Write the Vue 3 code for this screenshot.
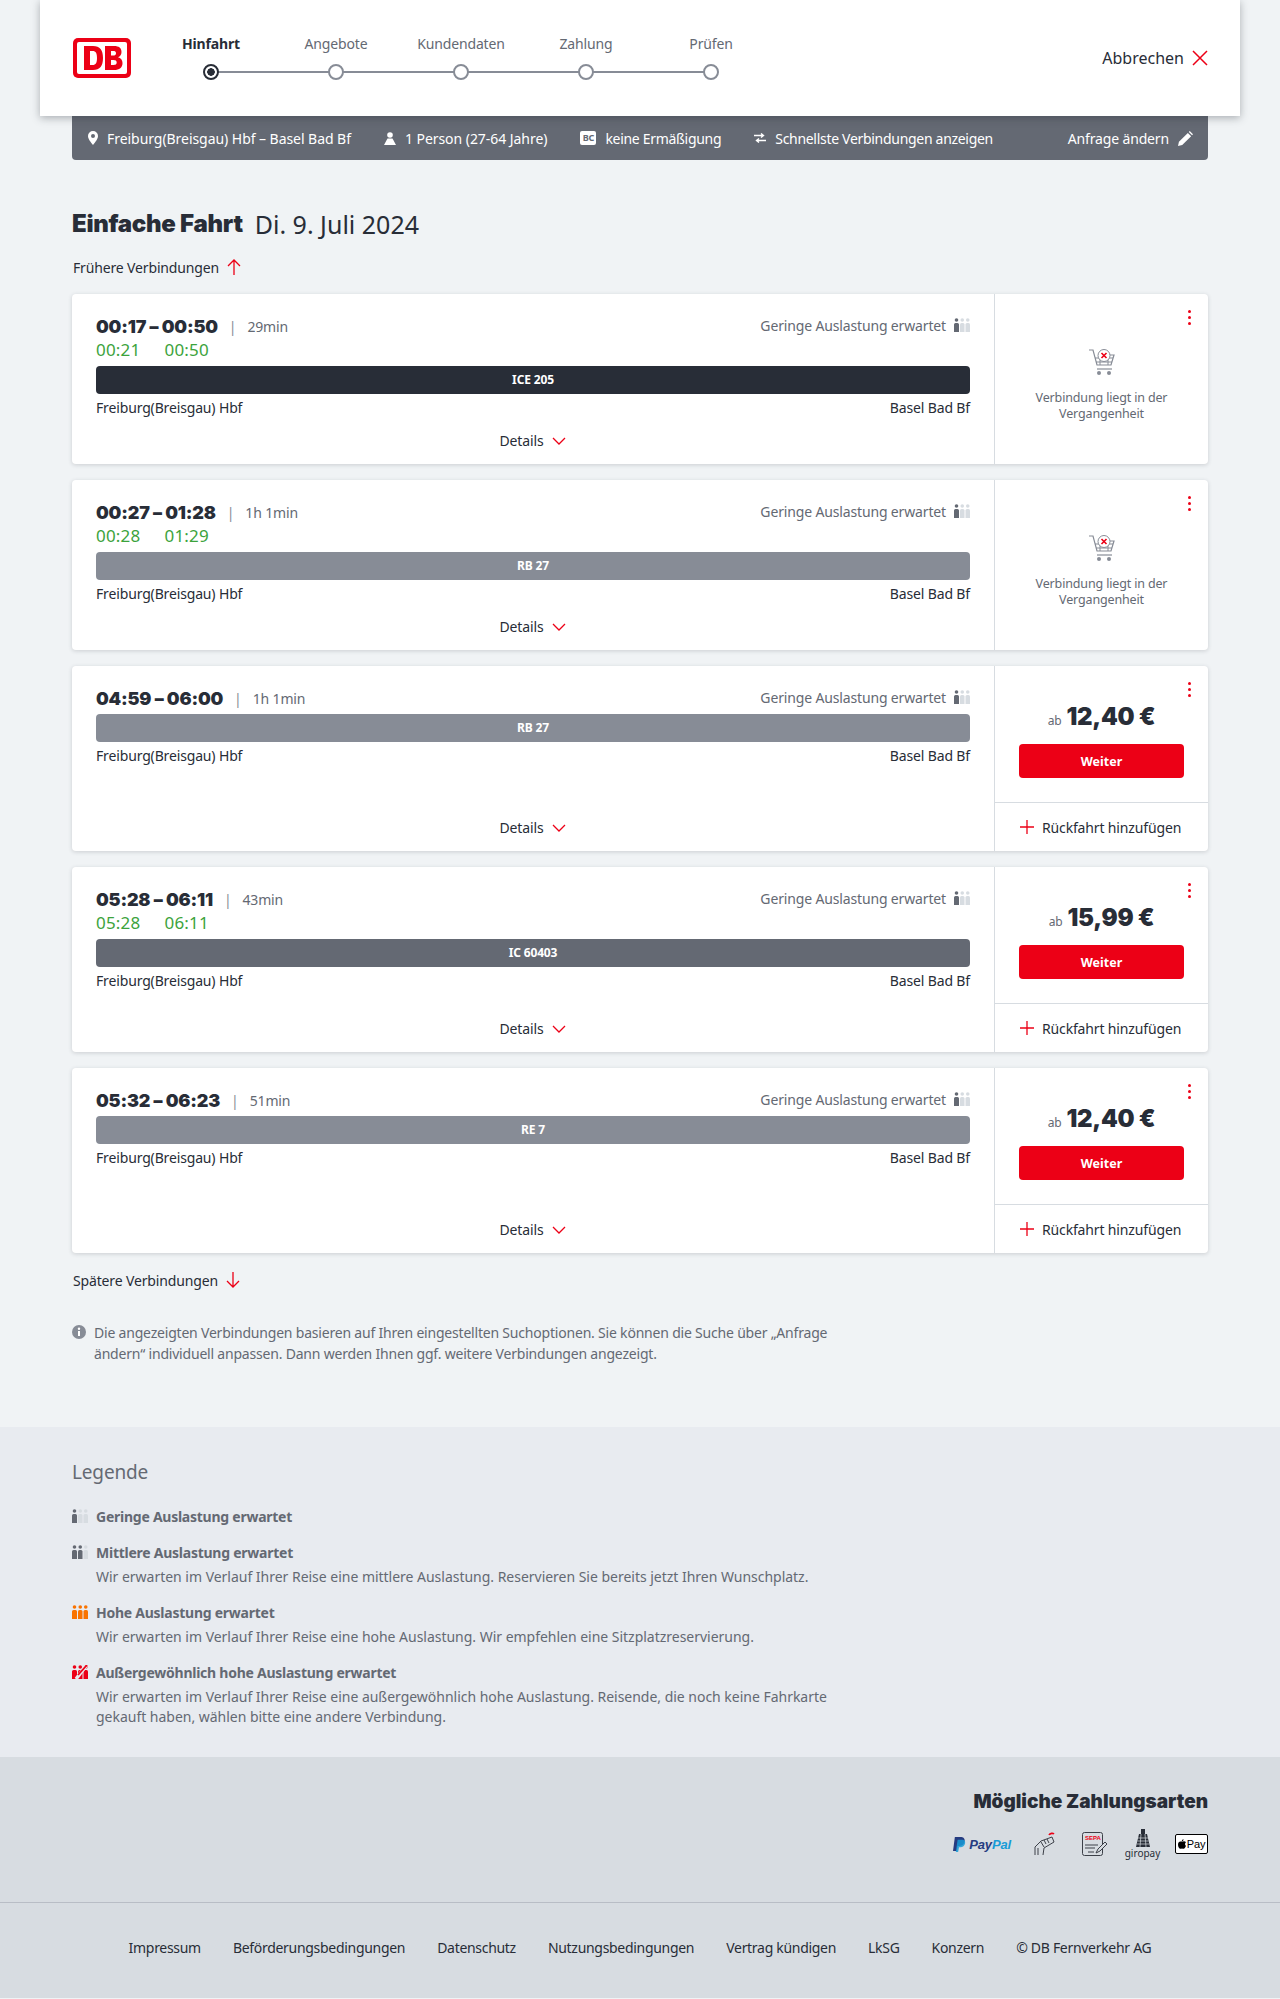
<template>
  <div class="page">
    <header class="top">
      <svg class="logo" viewBox="0 0 58 40" width="58" height="40">
        <rect width="58" height="40" rx="5" fill="#ec0016" />
        <rect x="4" y="4" width="50" height="32" rx="2" fill="#fff" />
        <path d="M11 8h9c7 0 10 4 10 12s-3 12-10 12h-9zM17 13v14h2.500c3.500 0 4.500-2.500 4.500-7s-1-7-4.500-7z" fill="#ec0016" fill-rule="evenodd" />
        <path d="M32 8h9c5 0 7.500 2 7.500 6 0 2.500-1.200 4.300-3.500 5.300 2.800.8 4.500 2.900 4.500 5.700 0 4.800-3 7-8.500 7h-9zM38 13v4.500h2c2 0 3-.7 3-2.300S42 13 40 13zM38 22v5h2.500c2.200 0 3.200-.8 3.200-2.500s-1-2.500-3.200-2.500z" fill="#ec0016" fill-rule="evenodd" />
      </svg>
      <ol class="steps">
        <li v-for="(s, i) in steps" :key="s" class="step" :class="{ active: i === 0, last: i === steps.length - 1 }">
          <span class="step-label">{{ s }}</span>
          <span class="step-dot"></span>
        </li>
      </ol>
      <a class="cancel">
        Abbrechen
        <svg viewBox="0 0 16 16" width="16" height="16"><path d="M1 1l14 14M15 1L1 15" stroke="#ec0016" stroke-width="1.500" fill="none" /></svg>
      </a>
    </header>

    <div class="wrap">
      <div class="summary">
        <span class="sum-item">
          <svg viewBox="0 0 10 14" width="10" height="14"><path d="M5 0a5 5 0 0 1 5 5c0 3-3 6.500-5 9-2-2.500-5-6-5-9a5 5 0 0 1 5-5zm0 3a2 2 0 1 0 0 4 2 2 0 0 0 0-4z" fill="#fff" fill-rule="evenodd" /></svg>
          Freiburg(Breisgau) Hbf – Basel Bad Bf
        </span>
        <span class="sum-item">
          <svg viewBox="0 0 12 13" width="12" height="13"><circle cx="6" cy="3" r="2.800" fill="#fff" /><path d="M3.500 6.500h5L12 13H0z" fill="#fff" /></svg>
          1 Person (27-64 Jahre)
        </span>
        <span class="sum-item tight">
          <span class="bc">BC</span>
          keine Ermäßigung
        </span>
        <span class="sum-item tight">
          <svg viewBox="0 0 12 10" width="12" height="10"><path d="M0 2.500h9M7 .5l2.500 2L7 4.500M12 7.500H3M5 5.500l-2.500 2L5 9.500" stroke="#fff" stroke-width="1.400" fill="none" /></svg>
          Schnellste Verbindungen anzeigen
        </span>
        <span class="sum-item change">
          Anfrage ändern
          <svg viewBox="0 0 16 16" width="15" height="15"><path d="M0 16l1-4.500L10.500 2l3.500 3.500L4.500 15zM11.500 1l1-1L16 3.500l-1 1z" fill="#fff" /></svg>
        </span>
      </div>

      <h1 class="title"><b>Einfache Fahrt</b><span>Di. 9. Juli 2024</span></h1>

      <a class="more first">
        Frühere Verbindungen
        <svg viewBox="0 0 14 16" width="14" height="16"><path d="M7 16V1M1 7l6-6 6 6" stroke="#ec0016" stroke-width="1.300" fill="none" /></svg>
      </a>

      <article v-for="c in connections" :key="c.time" class="card">
        <div class="main">
          <div class="row">
            <span class="time">{{ c.time }}</span>
            <span class="sep">|</span>
            <span class="dur">{{ c.dur }}</span>
            <span class="load">
              Geringe Auslastung erwartet
              <svg viewBox="0 0 16 14" width="16" height="14">
                <g v-for="(f, n) in figures" :key="n" :fill="n === 0 ? '#646973' : '#d7dce1'">
                  <circle :cx="f.x + f.w / 2" cy="2" r="1.800" />
                  <path :d="body(f)" />
                </g>
              </svg>
            </span>
          </div>
          <div v-if="c.live" class="live">
            <span>{{ c.live[0] }}</span>
            <span>{{ c.live[1] }}</span>
          </div>
          <div class="train" :class="c.kind">{{ c.train }}</div>
          <div class="stations">
            <span>Freiburg(Breisgau) Hbf</span>
            <span>Basel Bad Bf</span>
          </div>
          <a class="details">
            Details
            <svg viewBox="0 0 14 8" width="14" height="8"><path d="M1 1l6 6 6-6" stroke="#ec0016" stroke-width="1.300" fill="none" /></svg>
          </a>
        </div>
        <div class="side">
          <span class="dots"><i></i><i></i><i></i></span>
          <div v-if="!c.price" class="past">
            <svg viewBox="0 0 26 26" width="26" height="26">
              <path d="M0 1h4l4 15h14l3-10h-5" stroke="#878c96" stroke-width="1.200" fill="none" />
              <path d="M6 9h18M7 13h16M11 7v9M19 7v9" stroke="#878c96" stroke-width="1" fill="none" />
              <circle cx="15" cy="6.500" r="6" fill="#fff" stroke="#878c96" />
              <path d="M12.500 4l5 5M17.500 4l-5 5" stroke="#ec0016" stroke-width="1.600" />
              <path d="M8 20h15" stroke="#878c96" stroke-width="1.200" />
              <circle cx="10" cy="24" r="2" fill="#878c96" /><circle cx="20" cy="24" r="2" fill="#878c96" />
            </svg>
            <p>Verbindung liegt in der Vergangenheit</p>
          </div>
          <template v-else>
            <div class="offer">
              <div class="price"><small>ab</small><b>{{ c.price }}</b></div>
              <button class="btn">Weiter</button>
            </div>
            <a class="back">
              <svg viewBox="0 0 14 14" width="14" height="14"><path d="M7 0v14M0 7h14" stroke="#ec0016" stroke-width="1.300" /></svg>
              Rückfahrt hinzufügen
            </a>
          </template>
        </div>
      </article>

      <a class="more later">
        Spätere Verbindungen
        <svg viewBox="0 0 14 16" width="14" height="16"><path d="M7 0v15M1 9l6 6 6-6" stroke="#ec0016" stroke-width="1.300" fill="none" /></svg>
      </a>

      <div class="info">
        <svg viewBox="0 0 14 14" width="14" height="14"><circle cx="7" cy="7" r="7" fill="#878c96" /><circle cx="7" cy="3.800" r="1.200" fill="#fff" /><rect x="6" y="6" width="2" height="5" fill="#fff" /></svg>
        <p>Die angezeigten Verbindungen basieren auf Ihren eingestellten Suchoptionen. Sie können die Suche über „Anfrage ändern“ individuell anpassen. Dann werden Ihnen ggf. weitere Verbindungen angezeigt.</p>
      </div>
    </div>

    <section class="legend">
      <div class="wrap">
        <h2>Legende</h2>
        <div v-for="l in legend" :key="l.title" class="leg-item">
          <svg viewBox="0 0 16 14" width="16" height="14">
            <g v-for="(f, n) in figures" :key="n" :fill="n < l.filled ? l.color : '#d7dce1'">
              <circle :cx="f.x + f.w / 2" cy="2" r="1.800" />
              <path :d="body(f)" />
            </g>
            <path v-if="l.slash" d="M4 14L14 1" stroke="#e8ebf0" stroke-width="3.500" />
            <path v-if="l.slash" d="M6 10L15 0" stroke="#ec0016" stroke-width="1.800" />
          </svg>
          <div>
            <h3>{{ l.title }}</h3>
            <p v-if="l.text">{{ l.text }}</p>
          </div>
        </div>
      </div>
    </section>

    <section class="pay">
      <div class="wrap">
        <h2>Mögliche Zahlungsarten</h2>
        <div class="pay-icons">
          <span class="paypal">
            <svg viewBox="0 0 14 16" width="13" height="15"><path d="M2 0h6c3 0 5 1.500 4.500 4.500C12 8 10 9.500 7 9.500H5L4 15H0z" fill="#253b80" /><path d="M5 3h5c2.500 0 3.500 1.500 3 4-.5 2.500-2.500 4-5 4H6.500L5.500 16H3z" fill="#179bd7" opacity=".85" /></svg>
            <b>Pay</b><b class="pal">Pal</b>
          </span>
          <svg class="hand" viewBox="0 0 22 24" width="22" height="24" fill="none" stroke="#3c4048" stroke-width="1">
            <path d="M1 23v-8l6-6 11-4 2 5-10 6-1 7M4 23v-7M7 10l3 5M10 8l2 4M13 7l2 4" />
            <path d="M15 3c1-2 4-2 5-1" stroke="#ec0016" stroke-width="1.600" />
          </svg>
          <span class="sepa">
            <svg viewBox="0 0 26 24" width="26" height="24" fill="none" stroke="#3c4048" stroke-width="1">
              <rect x=".5" y=".5" width="20" height="23" rx="2" />
              <path d="M3 13h13M3 16h10M6 20h6" />
              <path d="M14 21l2-4 7-7 2 2-7 7z" fill="#d7dce1" />
            </svg>
            <em>SEPA</em>
          </span>
          <span class="giro">
            <svg viewBox="0 0 14 18" width="14" height="18"><path d="M5 0h4v5H5zM3 5h8l3 13H0z" fill="#282d37" /><path d="M2 9h10M1.500 12h11M1 15h12M5 5l-1 13M9 5l1 13" stroke="#d7dce1" stroke-width=".7" /></svg>
            <span>giropay</span>
          </span>
          <span class="apple">
            <svg viewBox="0 0 10 12" width="8" height="10"><path d="M7 0c0 1.500-1 2.500-2.200 2.500C4.700 1.200 5.800 0 7 0zM5 3c1 0 1.500-.5 2.500-.5S9.500 3 10 3.700C8.300 4.700 8.500 7.500 10 8.200 9.500 10 8.200 12 7 12c-.8 0-1.200-.5-2-.5S3.800 12 3 12C1.500 12 0 9 0 6.800 0 4.300 1.500 2.800 3 2.800c.8 0 1.400.2 2 .2z" fill="#000" /></svg>
            Pay
          </span>
        </div>
      </div>
    </section>

    <footer class="foot">
      <a v-for="f in footer" :key="f">{{ f }}</a>
    </footer>
  </div>
</template>

<script setup>
const steps = ["Hinfahrt", "Angebote", "Kundendaten", "Zahlung", "Prüfen"];

const connections = [
  { time: "00:17 – 00:50", dur: "29min", live: ["00:21", "00:50"], train: "ICE 205", kind: "ice" },
  { time: "00:27 – 01:28", dur: "1h 1min", live: ["00:28", "01:29"], train: "RB 27", kind: "rb" },
  { time: "04:59 – 06:00", dur: "1h 1min", train: "RB 27", kind: "rb", price: "12,40 €" },
  { time: "05:28 – 06:11", dur: "43min", live: ["05:28", "06:11"], train: "IC 60403", kind: "ic", price: "15,99 €" },
  { time: "05:32 – 06:23", dur: "51min", train: "RE 7", kind: "rb", price: "12,40 €" },
];

const legend = [
  { title: "Geringe Auslastung erwartet", filled: 1, color: "#646973" },
  { title: "Mittlere Auslastung erwartet", filled: 2, color: "#646973", text: "Wir erwarten im Verlauf Ihrer Reise eine mittlere Auslastung. Reservieren Sie bereits jetzt Ihren Wunschplatz." },
  { title: "Hohe Auslastung erwartet", filled: 3, color: "#f97300", text: "Wir erwarten im Verlauf Ihrer Reise eine hohe Auslastung. Wir empfehlen eine Sitzplatzreservierung." },
  { title: "Außergewöhnlich hohe Auslastung erwartet", filled: 3, color: "#ec0016", slash: true, text: "Wir erwarten im Verlauf Ihrer Reise eine außergewöhnlich hohe Auslastung. Reisende, die noch keine Fahrkarte gekauft haben, wählen bitte eine andere Verbindung." },
];

const footer = ["Impressum", "Beförderungsbedingungen", "Datenschutz", "Nutzungsbedingungen", "Vertrag kündigen", "LkSG", "Konzern", "© DB Fernverkehr AG"];

// die drei Sitz-Figuren der Auslastung
const figures = [
  { x: 0, w: 5 },
  { x: 6, w: 4.500 },
  { x: 11.500, w: 4.500 },
];

const body = (f) => `M${f.x} 14V6.500a1.500 1.500 0 0 1 1.500-1.500h${f.w - 3}a1.500 1.500 0 0 1 1.500 1.500V14z`;
</script>

<style>
body {
  background: #f0f3f5;
}
</style>

<style scoped>
.page {
  font-family: "Noto Sans", "Open Sans", sans-serif;
  font-size: 14px;
  letter-spacing: -0.15px;
  color: #282d37;
}
.wrap {
  width: 1136px;
  margin: 0 auto;
}
.top {
  position: relative;
  z-index: 2;
  width: 1200px;
  height: 116px;
  margin: 0 auto;
  background: #fff;
  display: flex;
  align-items: center;
  padding: 0 33px;
  box-sizing: border-box;
  box-shadow: 0 2px 8px rgba(40, 45, 55, 0.35);
}
.logo {
  flex: none;
}
.steps {
  list-style: none;
  margin: -2px 0 0 17.500px;
  padding: 0;
  display: flex;
}
.step {
  position: relative;
  width: 125px;
  display: flex;
  flex-direction: column;
  align-items: center;
  gap: 10px;
  color: #646973;
}
.step-label {
  line-height: 20px;
}
.step.active .step-label {
  font-weight: 700;
  color: #282d37;
}
.step-dot {
  width: 16px;
  height: 16px;
  box-sizing: border-box;
  border: 2px solid #878c96;
  border-radius: 50%;
  background: #fff;
  position: relative;
  z-index: 1;
}
.step.active .step-dot {
  border-color: #282d37;
  background: radial-gradient(circle, #282d37 0 3.500px, #fff 4px);
}
.step::after {
  content: "";
  position: absolute;
  left: 50%;
  width: 100%;
  bottom: 7px;
  height: 2px;
  background: #878c96;
}
.step.last::after {
  display: none;
}
.cancel {
  margin-left: auto;
  margin-right: -1px;
  display: flex;
  align-items: center;
  gap: 8px;
  font-size: 16px;
  letter-spacing: 0;
}
.summary {
  height: 44px;
  background: #646973;
  color: #fff;
  border-radius: 0 0 4px 4px;
  display: flex;
  align-items: center;
  gap: 33px;
  padding: 0 15px 0 16px;
  white-space: nowrap;
  letter-spacing: -0.05px;
}
.sum-item {
  display: flex;
  align-items: center;
  gap: 9px;
}
.tight {
  letter-spacing: -0.3px;
}
.change {
  margin-left: auto;
  letter-spacing: -0.15px;
}
.bc {
  width: 16px;
  height: 14px;
  background: #fff;
  color: #646973;
  border-radius: 2px;
  font-size: 9px;
  font-weight: 700;
  line-height: 14px;
  text-align: center;
}
.title {
  margin: 48px 0 0;
  height: 32px;
  line-height: 32px;
  font-size: 25px;
  font-weight: 400;
  letter-spacing: 0;
  display: flex;
  gap: 12px;
}
.title b {
  font-family: Inter, sans-serif;
  font-weight: 900;
  font-size: 24px;
  letter-spacing: -0.3px;
}
.more {
  display: flex;
  align-items: center;
  gap: 8px;
  padding-left: 1px;
  height: 20px;
}
.first {
  margin: 17px 0 17px;
}
.later {
  margin-top: 17px;
}
.card {
  display: flex;
  background: #fff;
  border-radius: 4px;
  box-shadow: 0 1px 4px rgba(40, 45, 55, 0.18);
  margin-bottom: 16px;
}
.card:nth-last-of-type(1) {
  margin-bottom: 0;
}
.main {
  width: 922px;
  box-sizing: border-box;
  padding: 20px 24px 13px;
  display: flex;
  flex-direction: column;
}
.row {
  display: flex;
  align-items: center;
  height: 24px;
}
.time {
  font-family: Inter, sans-serif;
  font-weight: 900;
  font-size: 18px;
  letter-spacing: -0.2px;
}
.sep {
  margin: 0 11px;
  color: #878c96;
}
.dur {
  color: #646973;
}
.load {
  margin-left: auto;
  display: flex;
  align-items: center;
  gap: 8px;
  color: #646973;
  margin-top: -2px;
}
.live {
  display: flex;
  gap: 24px;
  color: #3ca33c;
  font-size: 17px;
  letter-spacing: 0.2px;
  line-height: 24px;
}
.train {
  margin-top: 4px;
  height: 28px;
  border-radius: 4px;
  color: #fff;
  font-size: 12px;
  font-weight: 700;
  line-height: 28px;
  text-align: center;
  flex: none;
}
.ice {
  background: #282d37;
}
.rb {
  background: #878c96;
}
.ic {
  background: #646973;
}
.stations {
  display: flex;
  justify-content: space-between;
  margin-top: 4px;
  line-height: 20px;
}
.details {
  margin-top: auto;
  padding-top: 13px;
  display: flex;
  justify-content: center;
  align-items: center;
  gap: 9px;
  line-height: 20px;
}
.side {
  position: relative;
  flex: 1;
  border-left: 1px solid #d7dce1;
  display: flex;
  flex-direction: column;
}
.dots {
  position: absolute;
  top: 16px;
  right: 17px;
  display: flex;
  flex-direction: column;
  gap: 3px;
}
.dots i {
  width: 3px;
  height: 3px;
  border-radius: 50%;
  background: #ec0016;
}
.past {
  padding-top: 55px;
  text-align: center;
  color: #646973;
  font-size: 12.500px;
}
.past svg {
  display: block;
  margin: 0 auto;
}
.past p {
  margin: 15px 24px 0;
  line-height: 16px;
}
.offer {
  flex: 1;
  padding: 36px 24px 24px;
  text-align: center;
}
.price {
  display: flex;
  justify-content: center;
  align-items: baseline;
  gap: 5px;
  height: 30px;
  line-height: 30px;
}
.price small {
  font-size: 12px;
  color: #646973;
}
.price b {
  font-family: Inter, sans-serif;
  font-weight: 900;
  font-size: 24px;
  letter-spacing: -0.3px;
}
.btn {
  display: block;
  width: 100%;
  height: 34px;
  margin-top: 12px;
  border: 0;
  border-radius: 4px;
  background: #ec0016;
  color: #fff;
  font: 700 12.500px "Noto Sans", sans-serif;
}
.back {
  height: 49px;
  box-sizing: border-box;
  border-top: 1px solid #d7dce1;
  display: flex;
  align-items: center;
  gap: 8px;
  padding-left: 25px;
}
.info {
  margin-top: 32px;
  display: flex;
  gap: 8px;
  padding-bottom: 63px;
  color: #646973;
  letter-spacing: -0.2px;
}
.info svg {
  flex: none;
  margin-top: 3px;
}
.info p {
  margin: 0;
  width: 760px;
  line-height: 21px;
}
.legend {
  background: #e8ebf0;
  height: 330px;
  padding-top: 32px;
  box-sizing: border-box;
  color: #646973;
}
.legend h2 {
  margin: 0 0 22px;
  font-size: 19px;
  font-weight: 400;
  line-height: 26px;
}
.leg-item {
  display: flex;
  gap: 8px;
  margin-bottom: 16px;
}
.leg-item svg {
  flex: none;
  margin-top: 2px;
}
.leg-item h3 {
  margin: 0;
  font-size: 14px;
  font-weight: 700;
  line-height: 20px;
  letter-spacing: -0.25px;
}
.leg-item p {
  margin: 4px 0 0;
  width: 760px;
  line-height: 20px;
  letter-spacing: -0.02px;
}
.pay {
  background: #d7dce1;
  height: 146px;
  border-bottom: 1px solid #b8bdc5;
  box-sizing: border-box;
  padding-top: 30px;
}
.pay h2 {
  margin: 0;
  text-align: right;
  font-family: Inter, sans-serif;
  font-weight: 900;
  font-size: 19px;
  letter-spacing: 0;
  line-height: 30px;
}
.pay-icons {
  margin-top: 12px;
  display: flex;
  justify-content: flex-end;
  align-items: center;
}
.paypal {
  display: flex;
  align-items: center;
  gap: 3px;
  font: italic 700 13px "Liberation Sans", sans-serif;
  color: #253b80;
}
.paypal b + b {
  margin-left: -3px;
}
.pal {
  color: #179bd7;
}
.hand {
  margin-left: 23px;
}
.sepa {
  position: relative;
  display: flex;
  margin-left: 26px;
}
.sepa em {
  position: absolute;
  top: 3px;
  left: 3px;
  font: 700 6px "Liberation Sans", sans-serif;
  letter-spacing: 0;
  color: #ec0016;
}
.giro {
  width: 33px;
  margin-left: 18px;
  display: flex;
  flex-direction: column;
  align-items: center;
  font-size: 10px;
  letter-spacing: 0;
  line-height: 12px;
}
.apple {
  width: 33px;
  height: 20px;
  margin-left: 16px;
  box-sizing: border-box;
  background: #fff;
  border: 1px solid #000;
  border-radius: 2px;
  display: flex;
  align-items: center;
  justify-content: center;
  gap: 1px;
  font: 11px "Liberation Sans", sans-serif;
  color: #000;
}
.foot {
  height: 95px;
  padding-bottom: 7px;
  box-sizing: border-box;
  background: #d7dce1;
  display: flex;
  justify-content: center;
  align-items: center;
  gap: 32px;
  letter-spacing: -0.3px;
}
</style>
